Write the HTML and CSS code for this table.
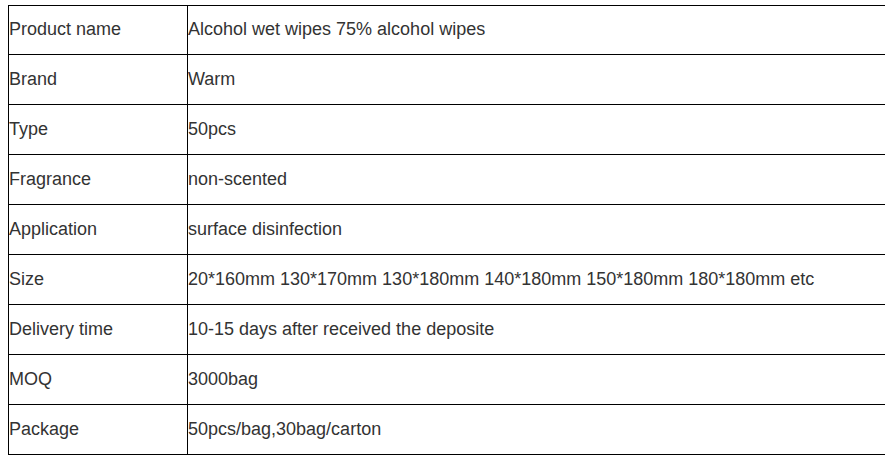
FILE: index.html
```html
<!DOCTYPE html>
<html>
<head>
<meta charset="utf-8">
<link rel="stylesheet" href="styles.css">
</head>
<body>
<table class="spec">
<tbody>
<tr><td class="k">Product name</td><td class="v">Alcohol wet wipes 75% alcohol wipes</td></tr>
<tr><td class="k">Brand</td><td class="v">Warm</td></tr>
<tr><td class="k">Type</td><td class="v">50pcs</td></tr>
<tr><td class="k">Fragrance</td><td class="v">non-scented</td></tr>
<tr><td class="k">Application</td><td class="v">surface disinfection</td></tr>
<tr><td class="k">Size</td><td class="v">20*160mm 130*170mm 130*180mm 140*180mm 150*180mm 180*180mm etc</td></tr>
<tr><td class="k">Delivery time</td><td class="v">10-15 days after received the deposite</td></tr>
<tr><td class="k">MOQ</td><td class="v">3000bag</td></tr>
<tr><td class="k">Package</td><td class="v">50pcs/bag,30bag/carton</td></tr>
</tbody>
</table>
</body>
</html>
```
FILE: styles.css
```css
html, body {
  margin: 0;
  padding: 0;
  background: #fff;
  overflow: hidden;
}
body {
  padding: 5px 0 0 8px;
  font-family: "Liberation Sans", Arial, sans-serif;
  font-size: 18px;
  color: #333;
}
.spec {
  border-collapse: collapse;
  width: 920px;
  table-layout: fixed;
}
.spec td {
  border: 1px solid #000;
  padding: 0 0 2px 0;
  height: 50px;
  box-sizing: border-box;
  vertical-align: middle;
  line-height: 24px;
  white-space: nowrap;
}
.spec tr:first-child td {
  height: 49px;
}
.spec .k {
  width: 179px;
}
```
